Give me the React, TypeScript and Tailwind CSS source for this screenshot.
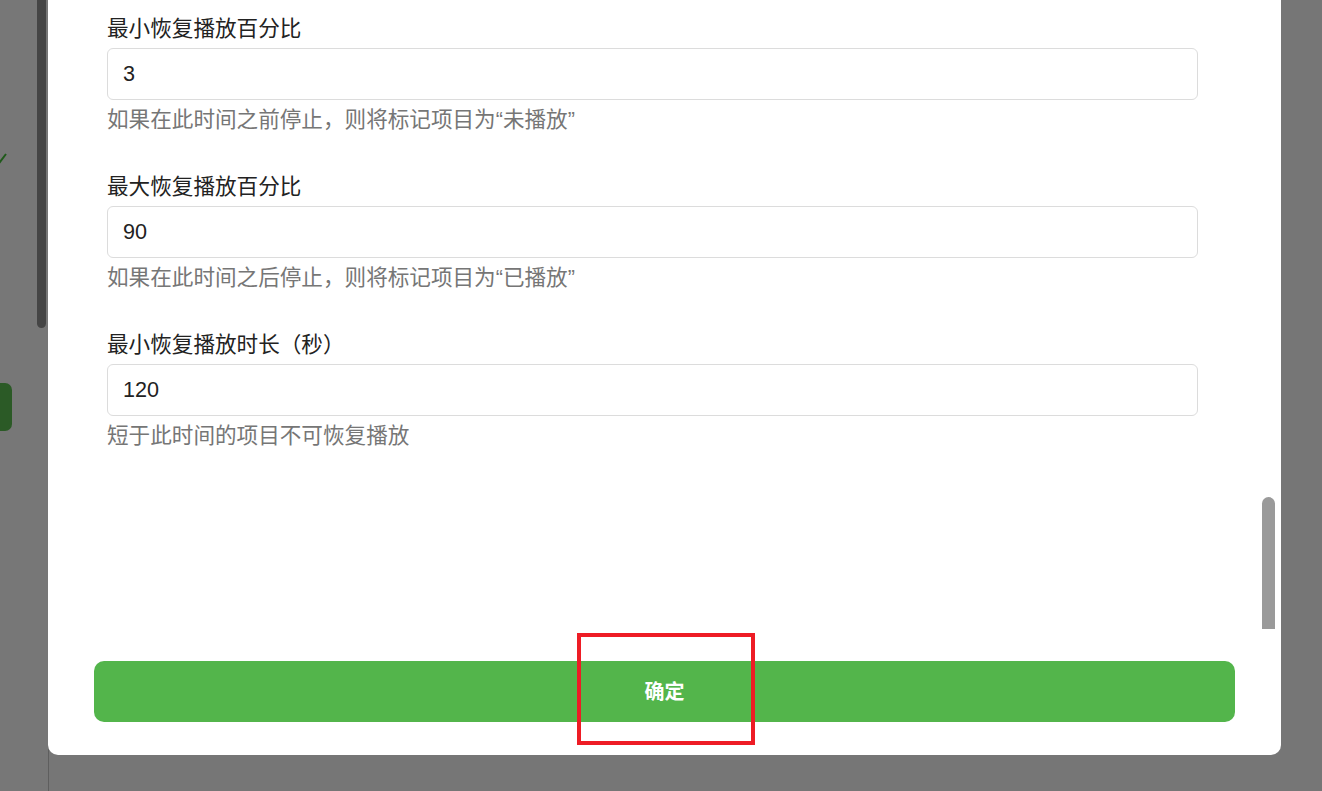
import React from "react";

const fields = [
  { label: "最小恢复播放百分比", value: "3", help: "如果在此时间之前停止，则将标记项目为“未播放”" },
  { label: "最大恢复播放百分比", value: "90", help: "如果在此时间之后停止，则将标记项目为“已播放”" },
  { label: "最小恢复播放时长（秒）", value: "120", help: "短于此时间的项目不可恢复播放" },
];

const font = { fontFamily: '"Liberation Sans", "Noto Sans CJK SC", sans-serif' };

export default function App() {
  return (
    <div className="relative w-[1322px] h-[791px] overflow-hidden bg-[#767676]" style={font}>
      {/* page behind the overlay, dimmed */}
      <div className="absolute left-0 top-0 h-full w-[49px] border-r border-[#5e5e5e] bg-[#777777]">
        <div className="absolute left-[37px] top-0 h-[328px] w-[9px] rounded-b-full bg-[#454545]" />
        <svg className="absolute left-[-4px] top-[152px]" width="12" height="12" viewBox="0 0 12 12">
          <path d="M1 7 L4 10 L10 2" fill="none" stroke="#1f5a1a" strokeWidth="2" />
        </svg>
        <div className="absolute left-[-10px] top-[383px] h-[48px] w-[22px] rounded-[7px] bg-[#2b5a26]" />
      </div>

      {/* dialog */}
      <div className="absolute left-[48px] top-0 flex h-[755px] w-[1233px] flex-col rounded-b-[10px] bg-white">
        <div className="relative flex-1 overflow-hidden">
          <div className="flex flex-col gap-[41px] pl-[59px] pr-[83px] pt-[16px]">
            {fields.map((f) => (
              <div key={f.label} className="flex flex-col">
                <div className="text-[21.6px] leading-[26px] text-[#222]">{f.label}</div>
                <div className="mt-[6px] flex h-[52px] items-center rounded-[6px] border border-[#dcdcdc] px-[15px] text-[21.6px] text-[#222]">
                  {f.value}
                </div>
                <div className="mt-[7px] text-[21.6px] leading-[26px] text-[#767676]">{f.help}</div>
              </div>
            ))}
          </div>
          <div className="absolute left-[1214px] top-[497px] h-[132px] w-[13px] rounded-t-full bg-[#9a9a9a]" />
        </div>
        <div className="h-[126px] pl-[46px] pr-[46px] pt-[32px]">
          <button className="flex h-[61px] w-full items-center justify-center rounded-[10px] bg-[#53b54b] text-[20px] font-bold text-white">
            确定
          </button>
        </div>
      </div>

      {/* annotation */}
      <div className="absolute left-[577px] top-[633px] h-[112px] w-[178px] border-[4px] border-[#ee1c25]" />
    </div>
  );
}
